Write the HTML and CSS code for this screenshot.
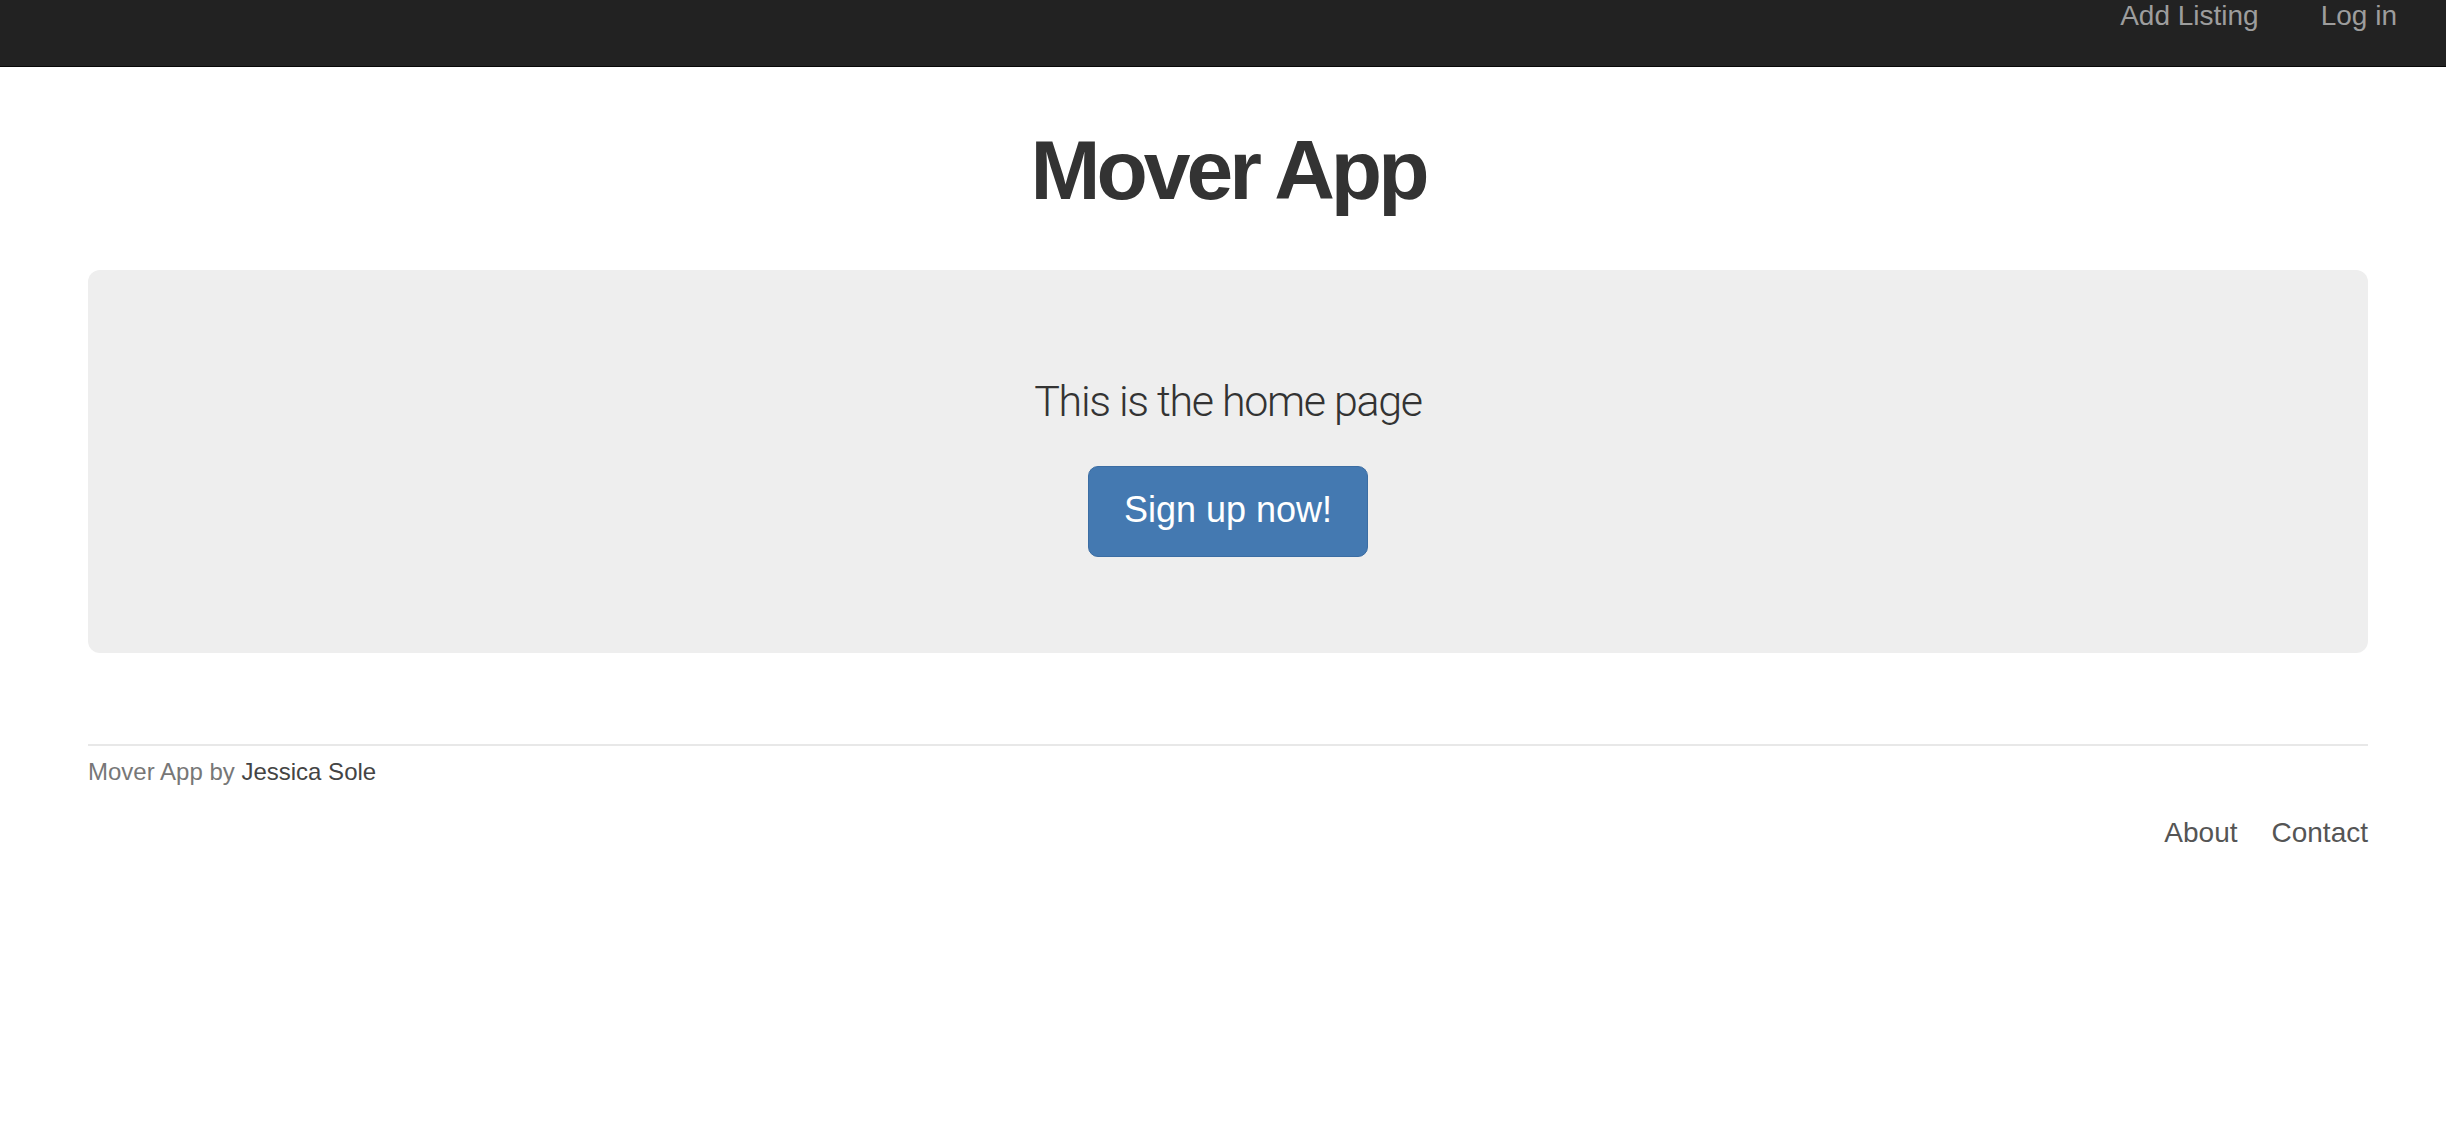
FILE: index.html
```html
<!DOCTYPE html>
<html lang="en">
<head>
<meta charset="utf-8">
<title>Mover App</title>
<link rel="stylesheet" href="styles.css">
</head>
<body>
<header class="topbar">
  <nav class="topnav">
    <a href="#" class="topnav-link">Add Listing</a>
    <a href="#" class="topnav-link">Log in</a>
  </nav>
</header>
<main class="container">
  <h1 class="title">Mover App</h1>
  <section class="jumbotron">
    <p class="lead">This is the home page</p>
    <a href="#" class="btn-primary">Sign up now!</a>
  </section>
  <footer class="footer">
    <p class="credit">Mover App by <a href="#" class="credit-link">Jessica Sole</a></p>
    <nav class="footnav">
      <a href="#" class="footnav-link">About</a>
      <a href="#" class="footnav-link">Contact</a>
    </nav>
  </footer>
</main>
</body>
</html>
```
FILE: styles.css
```css
html, body {
  margin: 0;
  padding: 0;
  background: #fff;
}
body {
  font-family: "Liberation Sans", Arial, sans-serif;
  color: #333;
}
a {
  text-decoration: none;
}
.topbar {
  height: 66px;
  background: #222;
  border-bottom: 1px solid #080808;
  display: flex;
  justify-content: flex-end;
  align-items: flex-start;
  padding-right: 49px;
}
.topnav {
  display: flex;
  gap: 62px;
}
.topnav-link {
  font-size: 28px;
  line-height: 32px;
  color: #9d9d9d;
}
.container {
  padding: 0 78px 0 88px;
}
.title {
  margin: 61px 0 0;
  font-size: 84px;
  line-height: 84px;
  font-weight: 700;
  letter-spacing: -4px;
  text-align: center;
  color: #333;
}
.jumbotron {
  margin-top: 58px;
  background: #eee;
  border-radius: 12px;
  padding: 110px 0 96px;
  display: flex;
  flex-direction: column;
  align-items: center;
}
.lead {
  margin: 0;
  font-family: Roboto, "Liberation Sans", sans-serif;
  font-weight: 300;
  font-size: 43px;
  line-height: 43px;
  letter-spacing: -1.3px;
  color: #333;
}
.btn-primary {
  margin-top: 43px;
  display: block;
  padding: 25px 35px 28px;
  font-size: 36px;
  line-height: 36px;
  color: #fff;
  background: #4479b1;
  border: 1px solid #3b6da3;
  border-radius: 10px;
}
.footer {
  margin-top: 91px;
  border-top: 2px solid #e8e8e8;
  padding-top: 14px;
}
.credit {
  margin: 0;
  font-size: 24px;
  line-height: 24px;
  color: #777;
}
.credit-link {
  color: #444;
}
.footnav {
  margin-top: 35px;
  display: flex;
  justify-content: flex-end;
  gap: 34px;
}
.footnav-link {
  font-size: 28px;
  line-height: 28px;
  color: #555;
}
```
